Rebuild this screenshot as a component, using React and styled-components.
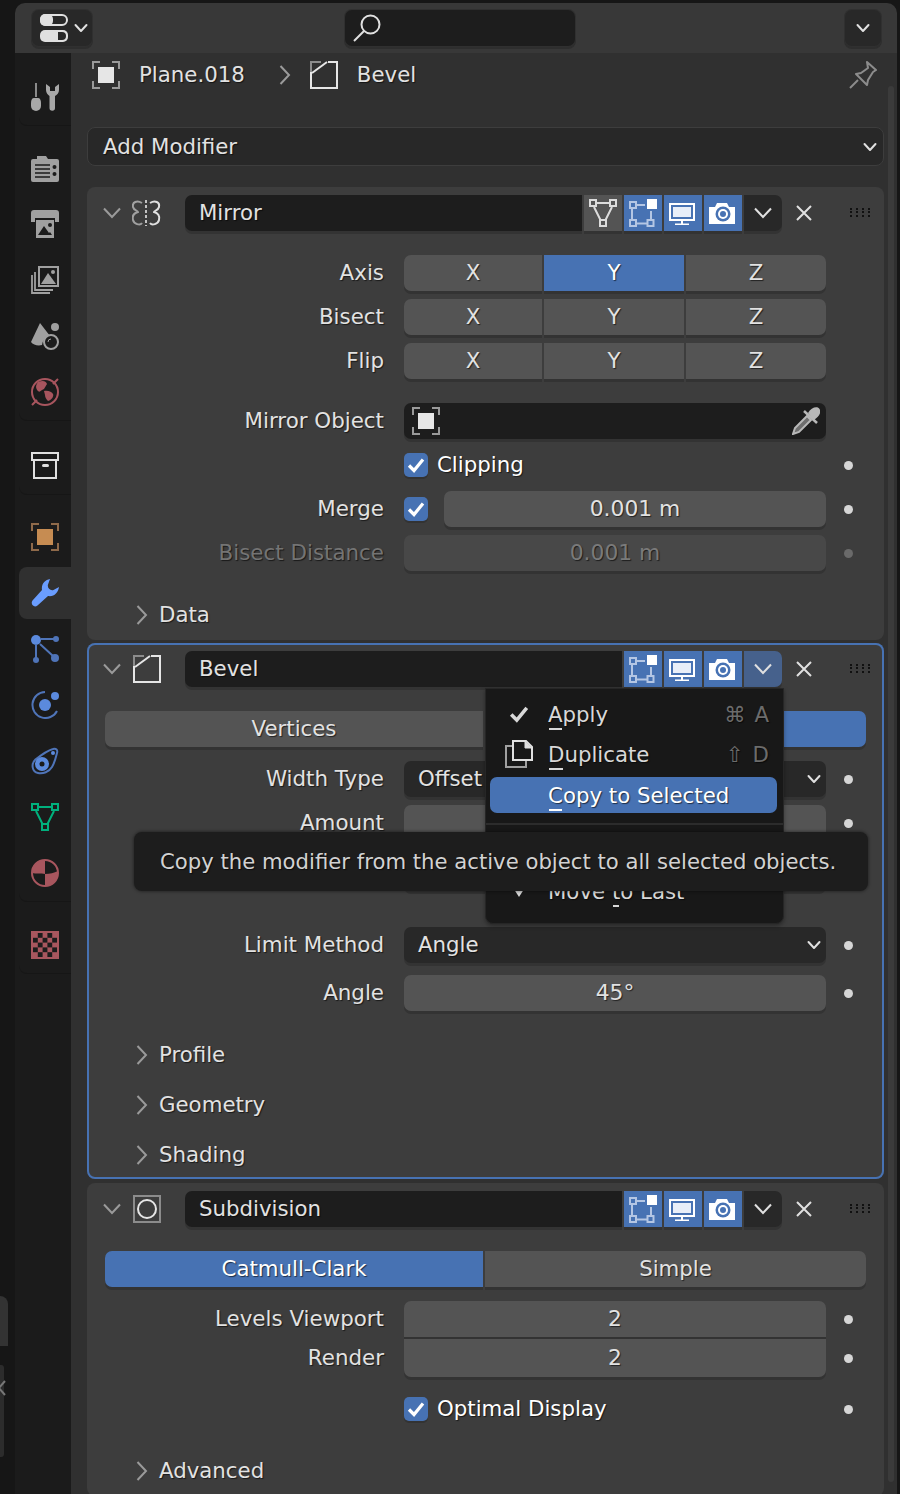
import styled, { createGlobalStyle } from "styled-components";

const GlobalStyle = createGlobalStyle`
  html, body {
    margin: 0;
    padding: 0;
    background: #161616;
  }
`;

const Screen = styled.div`
  width: 900px;
  height: 1494px;
  display: flex;
  overflow: hidden;
  position: relative;
  background: #161616;
  font-family: "DejaVu Sans", sans-serif;
  font-size: 21.3px;
  color: #e2e2e2;
  text-shadow: 1px 1px 1px rgba(0, 0, 0, 0.6);
`;

const LeftEdge = styled.div`
  width: 15px;
  flex: none;
  display: flex;
  flex-direction: column;
  padding-top: 1296px;
  box-sizing: border-box;
`;

const EdgePanel = styled.div`
  width: 8px;
  height: 50px;
  background: #333;
  border-top-right-radius: 8px;
`;

const EdgeRegion = styled.div`
  width: 4px;
  height: 92px;
  margin-top: 19px;
  background: #2c2c2c;
  border-radius: 0 3px 3px 0;
  position: relative;
  svg {
    position: absolute;
    left: -2px;
    top: 15px;
  }
`;

const Editor = styled.div`
  flex: 1;
  margin: 3px 3px 0 0;
  display: flex;
  flex-direction: column;
  border-radius: 10px 10px 0 0;
  overflow: hidden;
`;

const Header = styled.div`
  height: 50px;
  flex: none;
  box-sizing: border-box;
  display: flex;
  align-items: center;
  padding: 0 16px 0 17px;
  background: #383838;
`;

const HeaderButton = styled.div`
  height: 36px;
  width: ${(p) => p.$width}px;
  box-sizing: border-box;
  display: flex;
  align-items: center;
  justify-content: ${(p) => (p.$start ? "flex-start" : "center")};
  padding-left: ${(p) => (p.$start ? 8 : 0)}px;
  gap: 6px;
  background: #282828;
  border-radius: 7px;
  box-shadow: 0 0 0 1px #303030, 0 2px 0 1px #2e2e2e;
`;

const SearchBox = styled.div`
  width: 230px;
  height: 36px;
  margin-left: 253px;
  margin-right: auto;
  box-sizing: border-box;
  padding-left: 8px;
  display: flex;
  align-items: center;
  background: #1d1d1d;
  border-radius: 7px;
  box-shadow: 0 0 0 1px #303030, 0 2px 0 1px #2e2e2e;
`;

const Body = styled.div`
  flex: 1;
  display: flex;
  min-height: 0;
`;

const TabColumn = styled.div`
  width: 56px;
  flex: none;
  box-sizing: border-box;
  padding: 16px 0 0 4px;
  background: #1b1b1b;
`;

const TabGroup = styled.div`
  margin-top: ${(p) => p.$top || 0}px;
  border-bottom-left-radius: 8px;
  box-shadow: 0 1px 0 #161616;
`;

const Tab = styled.div`
  height: ${(p) => (p.$active ? 52 : 56)}px;
  margin: ${(p) => (p.$active ? "2px 0" : "0")};
  display: flex;
  align-items: center;
  justify-content: center;
  background: ${(p) => (p.$active ? "#303030" : "transparent")};
  border-radius: 8px 0 0 8px;
`;

const Content = styled.div`
  flex: 1;
  position: relative;
  box-sizing: border-box;
  padding: 0 13px 0 16px;
  background: #303030;
`;

const Scrollbar = styled.div`
  position: absolute;
  right: 3px;
  top: 33px;
  bottom: 12px;
  width: 6px;
  border-radius: 3px;
  background: #3b3b3b;
`;

const Breadcrumb = styled.div`
  height: 43px;
  display: flex;
  align-items: center;
  padding: 0 7px 0 5px;
`;

const CrumbText = styled.span`
  margin-left: ${(p) => p.$left}px;
  margin-right: ${(p) => p.$right || 0}px;
`;

const CrumbIcon = styled.div`
  display: flex;
  margin-left: 19px;
`;

const Pin = styled.div`
  margin-left: auto;
  display: flex;
`;

const AddModifier = styled.div`
  height: 39px;
  margin: 31px 0 21px;
  box-sizing: border-box;
  padding: 0 6px 0 15px;
  display: flex;
  align-items: center;
  justify-content: space-between;
  background: #282828;
  border: 1px solid #3d3d3d;
  border-radius: 8px;
`;

const Panel = styled.section`
  position: relative;
  box-sizing: border-box;
  padding: 8px 0 ${(p) => (p.$active ? 7 : 8)}px;
  margin-bottom: ${(p) => p.$bottom || 0}px;
  background: #3d3d3d;
  border-radius: 8px;
  box-shadow: ${(p) => (p.$active ? "inset 0 0 0 2px #4772b3" : "none")};
`;

const PanelHead = styled.div`
  height: 36px;
  display: flex;
  align-items: center;
  padding-left: 16px;
`;

const PanelIcon = styled.div`
  width: 30px;
  margin: 0 23px 0 11px;
  display: flex;
  justify-content: center;
`;

const NameField = styled.div`
  flex: 1;
  height: 36px;
  line-height: 36px;
  padding-left: 14px;
  background: #1d1d1d;
  border-radius: 7px 0 0 7px;
  box-shadow: 0 3px 0 #333;
`;

const ModeToggle = styled.div`
  width: 38px;
  height: 36px;
  margin-left: 2px;
  display: flex;
  align-items: center;
  justify-content: center;
  background: ${(p) => (p.$on ? "#4772b3" : "#545454")};
  box-shadow: 0 3px 0 #333;
`;

const ExtraMenu = styled.div`
  width: 38px;
  height: 36px;
  margin-left: 2px;
  display: flex;
  align-items: center;
  justify-content: center;
  background: ${(p) => (p.$open ? "#46618c" : "#282828")};
  border-radius: 0 7px 7px 0;
  box-shadow: 0 3px 0 #333;
`;

const CloseButton = styled.div`
  width: 18px;
  margin-left: 13px;
  display: flex;
`;

const Grip = styled.div`
  width: 22px;
  margin: 0 12px 0 37px;
  display: flex;
`;

const Row = styled.div`
  height: 36px;
  margin-top: ${(p) => p.$top}px;
  display: flex;
  align-items: center;
`;

const Label = styled.div`
  width: 297px;
  margin-right: 20px;
  padding-bottom: 2px;
  flex: none;
  text-align: right;
  font-size: 21.4px;
  color: ${(p) => (p.$dim ? "#747474" : "#e2e2e2")};
`;

const FieldSlot = styled.div`
  width: 422px;
  flex: none;
  display: flex;
  align-items: center;
`;

const Dot = styled.div`
  width: 9px;
  height: 9px;
  margin-left: 18px;
  border-radius: 50%;
  background: ${(p) => (p.$dim ? "#6a6a6a" : "#d6d6d6")};
`;

const Segmented = styled.div`
  flex: 1;
  display: grid;
  grid-template-columns: 138px 140px 140px;
  gap: 2px;
`;

const SegButton = styled.div`
  height: 36px;
  line-height: 36px;
  text-align: center;
  background: ${(p) => (p.$on ? "#4772b3" : "#545454")};
  color: ${(p) => (p.$on ? "#fff" : "#e2e2e2")};
  box-shadow: 0 3px 0 #333;
  &:first-child {
    border-radius: 7px 0 0 7px;
  }
  &:last-child {
    border-radius: 0 7px 7px 0;
  }
`;

const NumberField = styled.div`
  flex: 1;
  height: ${(p) => p.$height || 36}px;
  line-height: ${(p) => p.$height || 36}px;
  margin-left: ${(p) => p.$left || 0}px;
  text-align: center;
  font-size: 21.8px;
  background: ${(p) => (p.$dim ? "#484848" : "#545454")};
  color: ${(p) => (p.$dim ? "#7a7a7a" : "#e2e2e2")};
  border-radius: ${(p) => p.$radius || "7px"};
  box-shadow: 0 3px 0 #333;
`;

const ObjectField = styled.div`
  flex: 1;
  height: 36px;
  box-sizing: border-box;
  padding: 0 6px 0 8px;
  display: flex;
  align-items: center;
  justify-content: space-between;
  background: #1d1d1d;
  border-radius: 7px;
  box-shadow: 0 3px 0 #333;
`;

const Select = styled.div`
  flex: 1;
  height: 36px;
  box-sizing: border-box;
  padding: 0 5px 1px 14px;
  display: flex;
  align-items: center;
  justify-content: space-between;
  background: #282828;
  border-radius: 7px;
  box-shadow: 0 3px 0 #333;
`;

const CheckBox = styled.div`
  width: 24px;
  height: 24px;
  flex: none;
  display: flex;
  align-items: center;
  justify-content: center;
  background: #4772b3;
  border-radius: 5px;
  box-shadow: 0 2px 0 #333;
`;

const CheckLabel = styled.span`
  margin-left: 9px;
  padding-bottom: 2px;
  color: #fff;
`;

const SubHead = styled.div`
  height: 36px;
  margin-top: ${(p) => p.$top}px;
  box-sizing: border-box;
  padding: 1px 0 0 49px;
  display: flex;
  align-items: center;
  gap: 11px;
`;

const TwoTabs = styled.div`
  margin: 24px 18px 0;
  display: grid;
  grid-template-columns: 378px 1fr;
  gap: 2px;
`;

const Menu = styled.div`
  position: absolute;
  left: 398px;
  top: 45px;
  width: 299px;
  height: 236px;
  box-sizing: border-box;
  padding: 6px 6px 0 4px;
  background: #181818;
  border: 1px solid #262626;
  border-radius: 0 0 8px 8px;
  box-shadow: 0 2px 4px rgba(0, 0, 0, 0.35);
`;

const MenuItem = styled.div`
  height: ${(p) => (p.$hot ? 36 : 40)}px;
  box-sizing: border-box;
  margin-top: ${(p) => p.$top || 0}px;
  display: flex;
  align-items: center;
  padding: 0 8px ${(p) => (p.$hot ? 0 : 2)}px 12px;
  color: ${(p) => (p.$hot ? "#fff" : "#d8d8d8")};
  background: ${(p) => (p.$hot ? "#4772b3" : "transparent")};
  border-radius: 7px;
`;

const MenuIcon = styled.div`
  width: 34px;
  margin-right: 12px;
  flex: none;
  display: flex;
  justify-content: center;
`;

const Shortcut = styled.span`
  margin-left: auto;
  color: #6c6c6c;
  word-spacing: 2px;
`;

const Key = styled.span`
  position: relative;
  &::after {
    content: "";
    position: absolute;
    left: 1px;
    right: 1px;
    bottom: -3px;
    height: 2px;
    background: currentColor;
  }
`;

const MenuRule = styled.div`
  height: 2px;
  margin: 10px -6px 0 -4px;
  background: #2c2c2c;
`;

const Tooltip = styled.div`
  position: absolute;
  left: 134px;
  top: 832px;
  width: 734px;
  height: 59px;
  box-sizing: border-box;
  padding-left: 26px;
  display: flex;
  align-items: center;
  white-space: nowrap;
  font-size: 21.2px;
  background: #1d1d1d;
  border-radius: 8px;
  box-shadow: 0 0 3px 1px rgba(0, 0, 0, 0.35);
  color: #d2d2d2;
`;

const Icon = ({ size = 28, w, h, children }) => (
  <svg width={w || size} height={h || size} viewBox={`0 0 ${w || size} ${h || size}`} fill="none">
    {children}
  </svg>
);

const Chevron = ({ size = 14, color = "#e0e0e0", sw = 2 }) => (
  <svg width={size} height={size} viewBox="0 0 14 14" fill="none">
    <path d="M1.5 4l5.5 6 5.5-6" stroke={color} strokeWidth={sw} strokeLinecap="round" strokeLinejoin="round" />
  </svg>
);

const PanelChevron = ({ color = "#9a9a9a" }) => (
  <svg width="18" height="12" viewBox="0 0 18 12" fill="none">
    <path d="M1 1.500l8 8.500 8-8.500" stroke={color} strokeWidth="2" />
  </svg>
);

const SubChevron = () => (
  <svg width="12" height="20" viewBox="0 0 12 20" fill="none">
    <path d="M1.500 1l8.500 9-8.500 9" stroke="#9a9a9a" strokeWidth="2" />
  </svg>
);

const ObjectIcon = ({ core = "#e6e6e6", corner = "#9a9a9a" }) => (
  <Icon>
    <path d="M1 8V1h7M20 1h7v7M27 20v7h-7M8 27H1v-7" stroke={corner} strokeWidth="2" />
    <rect x="6" y="6" width="16" height="16" fill={core} />
  </Icon>
);

const BevelIcon = () => (
  <Icon>
    <path d="M1 11V1h10" stroke="#8c8c8c" strokeWidth="2" />
    <path d="M18 1h9v26H1V11" stroke="#e6e6e6" strokeWidth="2" />
    <path d="M2 12L17 1" stroke="#e6e6e6" strokeWidth="2" />
  </Icon>
);

const MirrorIcon = () => (
  <svg width="30" height="28" viewBox="1 0 30 28" fill="none">
    <path d="M15 1v26" stroke="#e6e6e6" strokeWidth="1.600" strokeDasharray="3 2" />
    <path d="M11 4C6 1 1 3 2 8c.5 3 5 4 5 5-4 1-6 4-5 8s7 6 9 3" stroke="#a0a0a0" strokeWidth="2" />
    <path d="M19 4c5-3 10-1 9 4-.5 3-5 4-5 5 4 1 6 4 5 8s-7 6-9 3" stroke="#e0e0e0" strokeWidth="2" />
  </svg>
);

const SubsurfIcon = () => (
  <Icon>
    <rect x="1" y="1" width="26" height="26" stroke="#8c8c8c" strokeWidth="2" />
    <circle cx="14" cy="14" r="9" stroke="#e6e6e6" strokeWidth="2" />
  </Icon>
);

const TriangleModeIcon = () => (
  <Icon>
    <path d="M7 4h14M5 8l7 14M23 8l-7 14" stroke="#dcdcdc" strokeWidth="2" />
    <rect x="1" y="1" width="6" height="6" stroke="#dcdcdc" strokeWidth="2" />
    <rect x="21" y="1" width="6" height="6" stroke="#dcdcdc" strokeWidth="2" />
    <rect x="11" y="21" width="6" height="6" stroke="#dcdcdc" strokeWidth="2" />
  </Icon>
);

const EditCageIcon = () => (
  <Icon>
    <path d="M7 6h9M3 10v11M7 24.500h11M22 12v9" stroke="#b4c6e4" strokeWidth="2" />
    <rect x="1" y="3" width="6" height="6" stroke="#b4c6e4" strokeWidth="2" />
    <rect x="1" y="21" width="6" height="6" stroke="#b4c6e4" strokeWidth="2" />
    <rect x="18.500" y="21" width="6" height="6" stroke="#b4c6e4" strokeWidth="2" />
    <rect x="18" y="0" width="10" height="10" fill="#fff" />
  </Icon>
);

const MonitorIcon = () => (
  <svg width="28" height="23" viewBox="0 -1 28 23" fill="none">
    <rect x="1" y="1" width="24" height="16" stroke="#fff" strokeWidth="2" />
    <rect x="4" y="4" width="18" height="10" fill="#e8eef8" />
    <path d="M13 18v3M6 21.500h14" stroke="#fff" strokeWidth="2" />
  </svg>
);

const CameraIcon = () => (
  <Icon w={28} h={23}>
    <path d="M0 5h6l2-4h10l2 4h6v17H0z" fill="#fff" />
    <circle cx="14" cy="12" r="7.500" fill="#4772b3" />
    <circle cx="14" cy="12" r="5" fill="#fff" />
    <circle cx="14" cy="12" r="3" fill="#4772b3" />
  </Icon>
);

const CloseIcon = () => (
  <svg width="18" height="18" viewBox="0 0 18 18" fill="none">
    <path d="M2 2l14 14M16 2L2 16" stroke="#e0e0e0" strokeWidth="2" />
  </svg>
);

const GripIcon = () => (
  <svg width="22" height="10" viewBox="0 0 22 10">
    {[0, 6, 12, 18].flatMap((x) =>
      [0, 3, 7].map((y) => <rect key={`${x}-${y}`} x={x} y={y} width="2" height="2" fill="#111" />)
    )}
  </svg>
);

const Dropper = () => (
  <Icon>
    <path d="M16 6C19 0 26-1 27.500 2c2 3 0 8-6 11z" fill="#b8b8b8" />
    <path d="M12 4l13 12" stroke="#b8b8b8" strokeWidth="2.500" />
    <path d="M15 9L3 21l-2 6 6-2 12-12z" fill="#6e6e6e" stroke="#b8b8b8" strokeWidth="2" />
  </Icon>
);

const CheckMark = ({ size = 18, color = "#fff" }) => (
  <svg width={size} height={size} viewBox="0 0 18 18" fill="none">
    <path d="M2 9.500l5 5L16 3.500" stroke={color} strokeWidth="3.200" />
  </svg>
);

const DuplicateIcon = () => (
  <Icon>
    <path d="M7 6H1v21h20v-6" stroke="#a0a0a0" strokeWidth="2" />
    <path d="M8 1h13l6 6v13H8z" stroke="#e0e0e0" strokeWidth="2" />
    <path d="M20 1v7h7" fill="#e0e0e0" stroke="#e0e0e0" strokeWidth="1" />
  </Icon>
);

const ToolIcon = () => (
  <Icon>
    <path d="M5 0v14" stroke="#a8a8a8" strokeWidth="1.600" />
    <path d="M3 15h4c2 0 3 2 3 5v3a5 5 0 01-10 0v-3c0-3 1-5 3-5z" fill="#a8a8a8" />
    <path d="M15 1v6c0 3 2 5 3.500 6v12a2.700 2.700 0 005.500 0V13c2-1 4-3 4-6V1l-4 3v4h-5V4z" fill="#a8a8a8" />
  </Icon>
);

const RenderIcon = () => (
  <Icon>
    <path d="M6 5V2h9l2 3h9a2 2 0 012 2v19a2 2 0 01-2 2H2a2 2 0 01-2-2V7a2 2 0 012-2z" fill="#a0a0a0" />
    <path d="M4 11h15M4 15h15M4 19h15M4 23h15" stroke="#1b1b1b" strokeWidth="1.600" />
    <circle cx="23.500" cy="13" r="2" fill="#1b1b1b" />
    <circle cx="23.500" cy="20" r="2" fill="#1b1b1b" />
  </Icon>
);

const OutputIcon = () => (
  <Icon>
    <path d="M3 0h22a3 3 0 013 3v9h-4V8H4v4H0V3a3 3 0 013-3z" fill="#a0a0a0" />
    <rect x="5" y="10" width="18" height="18" fill="#a0a0a0" />
    <path d="M7 25l6-9 5 7 1-1 2 3z" fill="#1b1b1b" />
    <circle cx="19" cy="15" r="2" fill="#1b1b1b" />
  </Icon>
);

const ViewLayerIcon = () => (
  <Icon>
    <path d="M1 9v18h18M4 6v18h18" stroke="#a0a0a0" strokeWidth="1.800" />
    <rect x="7" y="0" width="21" height="21" fill="#a0a0a0" />
    <rect x="9" y="2" width="17" height="17" fill="#1b1b1b" />
    <path d="M10 18l7-11 8 11z" fill="#a0a0a0" />
    <circle cx="22" cy="6" r="2" fill="#a0a0a0" />
  </Icon>
);

const SceneIcon = () => (
  <Icon>
    <path d="M9 1L0 20c2 3 7 4 11 3a10 10 0 018-9z" fill="#a0a0a0" />
    <circle cx="24" cy="5" r="4" fill="#a0a0a0" />
    <circle cx="20" cy="20" r="7" stroke="#a0a0a0" strokeWidth="2" fill="#1b1b1b" />
    <path d="M17 20a3 3 0 013-3" stroke="#a0a0a0" strokeWidth="1" />
  </Icon>
);

const WorldIcon = () => (
  <Icon>
    <circle cx="14" cy="14" r="13" stroke="#a8555e" strokeWidth="2" />
    <path d="M27 1l-5 5M1 27l5-5" stroke="#a8555e" strokeWidth="2" />
    <path d="M7 4c5-2 8-1 9 2l-3 5c-3 1-4 4-6 2S4 8 7 4z" fill="#a8555e" />
    <path d="M13 13c4-1 8 1 9 3s-1 6-5 7c-2-2-3-4-3-6z" fill="#a8555e" />
  </Icon>
);

const CollectionIcon = () => (
  <Icon>
    <rect x="1" y="1" width="26" height="7" stroke="#e0e0e0" strokeWidth="2" />
    <path d="M3 8v18h22V8" stroke="#e0e0e0" strokeWidth="2" />
    <rect x="11" y="12" width="7" height="3" rx="1.500" fill="#e0e0e0" />
  </Icon>
);

const WrenchIcon = () => (
  <Icon>
    <path
      d="M19 0C14 1 10 5 11 11L1.500 21.500C-1 25 3 29.500 6.500 26.500L17 17C23 18 27 14 28 8L22.500 11C19 12 16 9 17 5.500Z"
      fill="#6a9dff"
    />
  </Icon>
);

const ParticlesIcon = () => (
  <Icon>
    <circle cx="5" cy="5" r="5" fill="#5b8add" />
    <circle cx="25" cy="4" r="3" fill="#4f74b8" />
    <circle cx="5" cy="25" r="3" fill="#4f74b8" />
    <circle cx="24" cy="23" r="4" fill="#4f74b8" />
    <path d="M10 4h13M5 9v14M9 9l13 12" stroke="#4f74b8" strokeWidth="2" />
  </Icon>
);

const PhysicsIcon = () => (
  <Icon>
    <path d="M14 1A13 13 0 1026 20" stroke="#4f74b8" strokeWidth="2" />
    <circle cx="14" cy="14" r="6" fill="#5b8add" />
    <circle cx="24" cy="5" r="4" fill="#5b8add" />
  </Icon>
);

const ConstraintIcon = () => (
  <Icon>
    <path
      d="M22 2c3-1 5 1 4 4-1 4-2 9-5 14-3 5-9 7-14 6-6-1-7-9-3-13 5-4 11-9 18-11z"
      stroke="#4f74b8"
      strokeWidth="2"
    />
    <circle cx="11" cy="17" r="7" fill="#5b8add" />
    <circle cx="11" cy="17" r="2.500" fill="#1b1b1b" />
    <circle cx="22" cy="6" r="2" fill="#5b8add" />
  </Icon>
);

const MeshDataIcon = () => (
  <Icon>
    <path d="M7 4h14M5 8l7 14M23 8l-7 14" stroke="#00b07d" strokeWidth="2" />
    <rect x="1" y="1" width="6" height="6" stroke="#00b07d" strokeWidth="2" />
    <rect x="21" y="1" width="6" height="6" stroke="#00b07d" strokeWidth="2" />
    <rect x="11" y="21" width="6" height="6" stroke="#00b07d" strokeWidth="2" />
  </Icon>
);

const MaterialIcon = () => (
  <Icon>
    <circle cx="14" cy="14" r="13" stroke="#a8565e" strokeWidth="2" />
    <path d="M14 1A13 13 0 001 14c4 1 9 0 13 1z" fill="#a8565e" />
    <path d="M14 15c5 0 9-1 13-3a13 13 0 01-13 15z" fill="#a8565e" />
  </Icon>
);

const TextureIcon = () => (
  <Icon>
    <rect width="28" height="28" fill="#a8565e" />
    {[0, 1, 2, 3, 4].flatMap((r) =>
      [0, 1, 2, 3, 4]
        .filter((c) => (r + c) % 2 === 1)
        .map((c) => <rect key={`${r}-${c}`} x={2 + c * 4.800} y={2 + r * 4.800} width="4.800" height="4.800" fill="#1b1b1b" />)
    )}
  </Icon>
);

const tabGroups = [
  { top: 0, tabs: [<ToolIcon key="tool" />] },
  {
    top: 15,
    tabs: [
      <RenderIcon key="render" />,
      <OutputIcon key="output" />,
      <ViewLayerIcon key="layer" />,
      <SceneIcon key="scene" />,
      <WorldIcon key="world" />,
    ],
  },
  { top: 18, tabs: [<CollectionIcon key="collection" />] },
  {
    top: 15,
    tabs: [
      <ObjectIcon key="object" core="#c68c52" corner="#8f6a4a" />,
      <WrenchIcon key="modifier" />,
      <ParticlesIcon key="particles" />,
      <PhysicsIcon key="physics" />,
      <ConstraintIcon key="constraint" />,
      <MeshDataIcon key="mesh" />,
      <MaterialIcon key="material" />,
    ],
  },
  { top: 16, tabs: [<TextureIcon key="texture" />] },
];

const HeadRow = ({ icon, name, edit, open }) => (
  <PanelHead>
    <PanelChevron />
    <PanelIcon>{icon}</PanelIcon>
    <NameField>{name}</NameField>
    {edit && (
      <ModeToggle>
        <TriangleModeIcon />
      </ModeToggle>
    )}
    <ModeToggle $on>
      <EditCageIcon />
    </ModeToggle>
    <ModeToggle $on>
      <MonitorIcon />
    </ModeToggle>
    <ModeToggle $on>
      <CameraIcon />
    </ModeToggle>
    <ExtraMenu $open={open}>
      <PanelChevron color="#e0e0e0" />
    </ExtraMenu>
    <CloseButton>
      <CloseIcon />
    </CloseButton>
    <Grip>
      <GripIcon />
    </Grip>
  </PanelHead>
);

const Axes = ({ label, on, top }) => (
  <Row $top={top}>
    <Label>{label}</Label>
    <FieldSlot>
      <Segmented>
        {["X", "Y", "Z"].map((a) => (
          <SegButton key={a} $on={a === on}>
            {a}
          </SegButton>
        ))}
      </Segmented>
    </FieldSlot>
  </Row>
);

const Sub = ({ top, children }) => (
  <SubHead $top={top}>
    <SubChevron />
    {children}
  </SubHead>
);

export default function App() {
  return (
    <Screen>
      <GlobalStyle />
      <LeftEdge>
        <EdgePanel />
        <EdgeRegion>
          <svg width="9" height="16" viewBox="0 0 9 16" fill="none">
            <path d="M7 1L1 8l6 7" stroke="#777" strokeWidth="2" />
          </svg>
        </EdgeRegion>
      </LeftEdge>
      <Editor>
        <Header>
          <HeaderButton $width={60} $start>
            <svg width="28" height="28" viewBox="0 0 28 28" fill="none">
              <rect x="1" y="1" width="26" height="10" rx="5" stroke="#e0e0e0" strokeWidth="2" />
              <rect x="0" y="0" width="13" height="12" rx="5" fill="#e0e0e0" />
              <rect x="0" y="16" width="28" height="12" rx="5" fill="#e0e0e0" />
              <path d="M18 18v8h4a4 4 0 000-8z" fill="#282828" />
            </svg>
            <Chevron />
          </HeaderButton>
          <SearchBox>
            <svg width="28" height="28" viewBox="0 0 28 28" fill="none">
              <circle cx="17.500" cy="10.500" r="9" stroke="#e0e0e0" strokeWidth="2" />
              <path d="M11 17L1 27" stroke="#e0e0e0" strokeWidth="2" />
            </svg>
          </SearchBox>
          <HeaderButton $width={36}>
            <Chevron />
          </HeaderButton>
        </Header>
        <Body>
          <TabColumn>
            {tabGroups.map((group, g) => (
              <TabGroup key={g} $top={group.top}>
                {group.tabs.map((tab) => (
                  <Tab key={tab.key} $active={tab.key === "modifier"}>
                    {tab}
                  </Tab>
                ))}
              </TabGroup>
            ))}
          </TabColumn>
          <Content>
            <Scrollbar />
            <Breadcrumb>
              <ObjectIcon />
              <CrumbText $left={19} $right={34}>
                Plane.018
              </CrumbText>
              <SubChevron />
              <CrumbIcon>
                <BevelIcon />
              </CrumbIcon>
              <CrumbText $left={19}>Bevel</CrumbText>
              <Pin>
                <svg width="28" height="28" viewBox="0 0 28 28" fill="none">
                  <path d="M18 1l9 8-3 2-5 8-1 5-11-11 5-1 7-5z" stroke="#8c8c8c" strokeWidth="2" strokeLinejoin="round" />
                  <path d="M9 19L1 27" stroke="#8c8c8c" strokeWidth="2" />
                </svg>
              </Pin>
            </Breadcrumb>
            <AddModifier>
              Add Modifier
              <Chevron />
            </AddModifier>

            <Panel $bottom={3}>
              <HeadRow icon={<MirrorIcon />} name="Mirror" edit />
              <Axes label="Axis" on="Y" top={24} />
              <Axes label="Bisect" top={8} />
              <Axes label="Flip" top={8} />
              <Row $top={24}>
                <Label>Mirror Object</Label>
                <FieldSlot>
                  <ObjectField>
                    <ObjectIcon />
                    <Dropper />
                  </ObjectField>
                </FieldSlot>
              </Row>
              <Row $top={8}>
                <Label />
                <FieldSlot>
                  <CheckBox>
                    <CheckMark />
                  </CheckBox>
                  <CheckLabel>Clipping</CheckLabel>
                </FieldSlot>
                <Dot />
              </Row>
              <Row $top={8}>
                <Label>Merge</Label>
                <FieldSlot>
                  <CheckBox>
                    <CheckMark />
                  </CheckBox>
                  <NumberField $left={16}>0.001 m</NumberField>
                </FieldSlot>
                <Dot />
              </Row>
              <Row $top={8}>
                <Label $dim>Bisect Distance</Label>
                <FieldSlot>
                  <NumberField $dim>0.001 m</NumberField>
                </FieldSlot>
                <Dot $dim />
              </Row>
              <Sub top={25}>Data</Sub>
            </Panel>

            <Panel $active $bottom={4}>
              <HeadRow icon={<BevelIcon />} name="Bevel" open />
              <TwoTabs>
                <SegButton>Vertices</SegButton>
                <SegButton $on>Edges</SegButton>
              </TwoTabs>
              <Row $top={14}>
                <Label>Width Type</Label>
                <FieldSlot>
                  <Select>
                    Offset
                    <Chevron />
                  </Select>
                </FieldSlot>
                <Dot />
              </Row>
              <Row $top={8}>
                <Label>Amount</Label>
                <FieldSlot>
                  <NumberField />
                </FieldSlot>
                <Dot />
              </Row>
              <Row $top={14}>
                <Label>Segments</Label>
                <FieldSlot>
                  <NumberField />
                </FieldSlot>
                <Dot />
              </Row>
              <Row $top={36}>
                <Label>Limit Method</Label>
                <FieldSlot>
                  <Select>
                    Angle
                    <Chevron />
                  </Select>
                </FieldSlot>
                <Dot />
              </Row>
              <Row $top={12}>
                <Label>Angle</Label>
                <FieldSlot>
                  <NumberField>45°</NumberField>
                </FieldSlot>
                <Dot />
              </Row>
              <Sub top={25}>Profile</Sub>
              <Sub top={14}>Geometry</Sub>
              <Sub top={14}>Shading</Sub>
              <Menu>
                <MenuItem>
                  <MenuIcon>
                    <CheckMark size={20} color="#d8d8d8" />
                  </MenuIcon>
                  <span>
                    <Key>A</Key>pply
                  </span>
                  <Shortcut>⌘ A</Shortcut>
                </MenuItem>
                <MenuItem>
                  <MenuIcon>
                    <DuplicateIcon />
                  </MenuIcon>
                  <span>
                    <Key>D</Key>uplicate
                  </span>
                  <Shortcut>⇧ D</Shortcut>
                </MenuItem>
                <MenuItem $hot $top={2}>
                  <MenuIcon />
                  <span>
                    <Key>C</Key>opy to Selected
                  </span>
                </MenuItem>
                <MenuRule />
                <MenuItem $top={7}>
                  <MenuIcon />
                  <span>
                    Move to <Key>F</Key>irst
                  </span>
                </MenuItem>
                <MenuItem>
                  <MenuIcon>
                    <svg width="14" height="14" viewBox="0 -2 14 14">
                      <path d="M0 0h14L7 11z" fill="#d8d8d8" />
                    </svg>
                  </MenuIcon>
                  <span>
                    Move <Key>t</Key>o Last
                  </span>
                </MenuItem>
              </Menu>
            </Panel>

            <Panel>
              <HeadRow icon={<SubsurfIcon />} name="Subdivision" />
              <TwoTabs>
                <SegButton $on>Catmull-Clark</SegButton>
                <SegButton>Simple</SegButton>
              </TwoTabs>
              <Row $top={14}>
                <Label>Levels Viewport</Label>
                <FieldSlot>
                  <NumberField $radius="7px 7px 0 0">2</NumberField>
                </FieldSlot>
                <Dot />
              </Row>
              <Row $top={3}>
                <Label>Render</Label>
                <FieldSlot>
                  <NumberField $height={38} $radius="0 0 7px 7px">
                    2
                  </NumberField>
                </FieldSlot>
                <Dot />
              </Row>
              <Row $top={15}>
                <Label />
                <FieldSlot>
                  <CheckBox>
                    <CheckMark />
                  </CheckBox>
                  <CheckLabel>Optimal Display</CheckLabel>
                </FieldSlot>
                <Dot />
              </Row>
              <Sub top={25}>Advanced</Sub>
            </Panel>
          </Content>
        </Body>
      </Editor>
      <Tooltip>Copy the modifier from the active object to all selected objects.</Tooltip>
    </Screen>
  );
}
